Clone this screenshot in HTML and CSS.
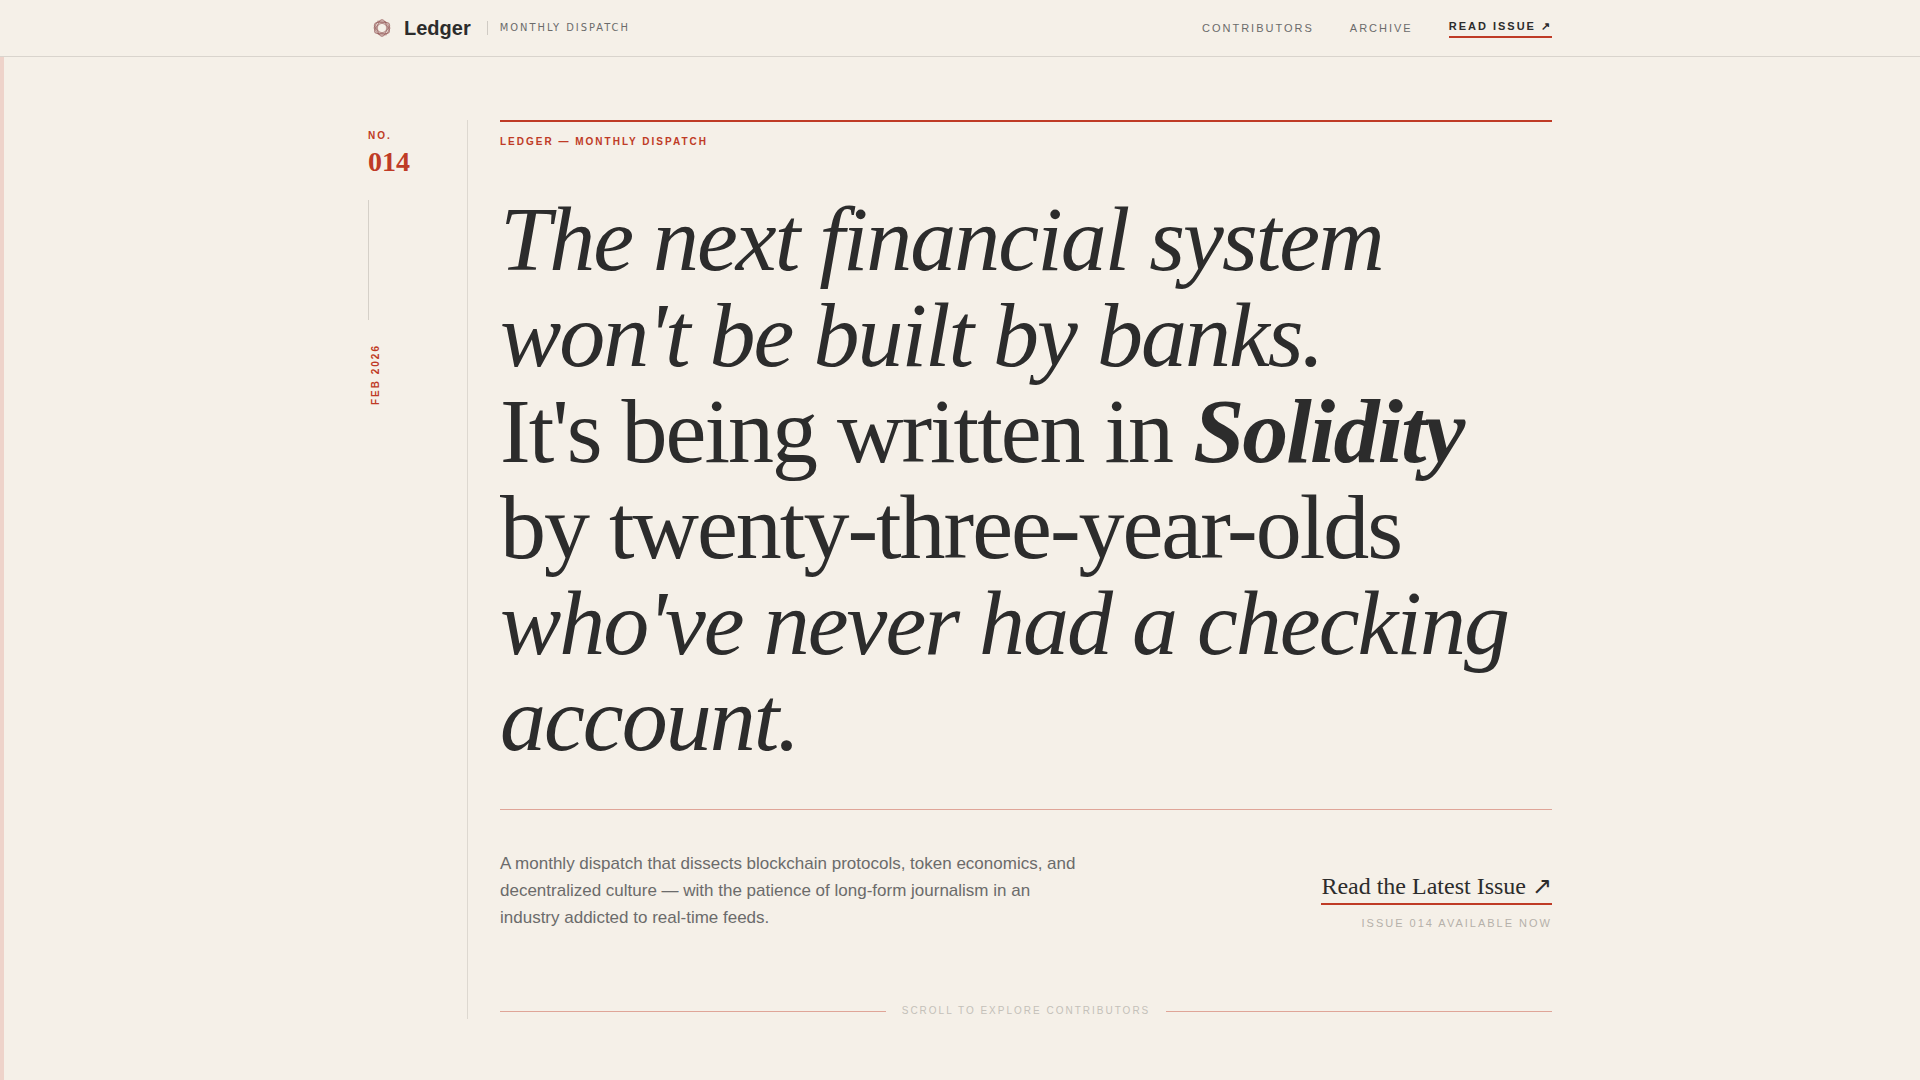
FILE: index.html
```html
<!DOCTYPE html>
<html lang="en">
<head>
    <meta charset="UTF-8">
    <meta name="viewport" content="width=device-width, initial-scale=1.0">
    <title>Ledger — Monthly Dispatch</title>
    <link rel="stylesheet" href="styles.css">
</head>
<body>

    <header class="site-header">
        <div class="container header-inner">
            <a class="brand" href="#">
                <svg class="brand-logo" viewBox="0 0 28 28" aria-hidden="true">
                    <ellipse cx="14" cy="14" rx="8.5" ry="4.5" transform="rotate(30 14 14)"/>
                    <ellipse cx="14" cy="14" rx="8.5" ry="4.5" transform="rotate(90 14 14)"/>
                    <ellipse cx="14" cy="14" rx="8.5" ry="4.5" transform="rotate(150 14 14)"/>
                    <path d="M14 6L21 10V18L14 22L7 18V10Z"/>
                    <path d="M14 7L21 10V18L14 21L7 18V10Z" transform="rotate(30 14 14)"/>
                    <circle cx="14" cy="14" r="5.5"/>
                </svg>
                <span class="brand-name">Ledger</span>
            </a>
            <span class="brand-tag">Monthly Dispatch</span>
            <nav class="site-nav">
                <a href="#contributors">Contributors</a>
                <a href="#archive">Archive</a>
                <a class="nav-cta" href="#issue">Read Issue ↗</a>
            </nav>
        </div>
    </header>

    <main class="hero">
        <div class="container hero-grid">
            <aside class="issue-rail">
                <span class="label">No.</span>
                <span class="issue-number">014</span>
                <span class="rail-line"></span>
                <span class="label issue-date">Feb 2026</span>
            </aside>

            <div class="hero-main">
                <p class="label kicker">Ledger — Monthly Dispatch</p>

                <h1>
                    <em>The next financial system<br>
                    won't be built by banks.</em><br>
                    It's being written in <em><strong>Solidity</strong></em><br>
                    by twenty-three-year-olds<br>
                    <em>who've never had a checking<br>
                    account.</em>
                </h1>

                <div class="hero-foot">
                    <p class="intro">A monthly dispatch that dissects blockchain protocols, token economics, and decentralized culture — with the patience of long-form journalism in an industry addicted to real-time feeds.</p>
                    <div class="cta">
                        <a class="cta-link" href="#issue">Read the Latest Issue ↗</a>
                        <span class="cta-note">Issue 014 available now</span>
                    </div>
                </div>

                <div class="scroll-hint">Scroll to explore contributors</div>
            </div>
        </div>
    </main>

</body>
</html>
```
FILE: styles.css
```css
* {
    box-sizing: border-box;
}

body {
    margin: 0;
    min-height: 100vh;
    display: flex;
    flex-direction: column;
    font-family: "Liberation Sans", Arial, sans-serif;
    background-color: #f5f0e8;
    color: #2c2c2c;
}

a {
    color: inherit;
    text-decoration: none;
}

p, h1 {
    margin: 0;
}

.container {
    width: 100%;
    max-width: 1280px;
    margin: 0 auto;
    padding: 0 48px;
}

/* header */

.site-header {
    border-bottom: 1px solid #d9d4cd;
}

.header-inner {
    display: flex;
    align-items: center;
    height: 56px;
}

.brand {
    display: flex;
    align-items: center;
    gap: 8px;
}

.brand-logo {
    width: 28px;
    height: 28px;
    fill: none;
    stroke: #8b4a4a;
    stroke-opacity: 0.5;
    stroke-width: 1;
}

.brand-name {
    font-size: 20px;
    font-weight: bold;
}

.brand-tag {
    margin-left: 16px;
    padding-left: 12px;
    border-left: 1px solid #d0cbc4;
    font-family: "DejaVu Sans Condensed", "DejaVu Sans", sans-serif;
    font-size: 11px;
    line-height: 14px;
    letter-spacing: 2px;
    text-transform: uppercase;
    color: #6b6b6b;
}

.site-nav {
    display: flex;
    align-items: center;
    gap: 36px;
    margin-left: auto;
    font-size: 11px;
    letter-spacing: 2px;
    text-transform: uppercase;
    color: #6b6b6b;
}

.nav-cta {
    padding: 2px 0 3px;
    border-bottom: 2px solid #bf3b26;
    font-weight: bold;
    color: #2c2c2c;
}

/* hero */

.hero {
    flex: 1;
    padding: 63px 0;
    background: linear-gradient(to right, #eed3ca 4px, transparent 4px);
}

.hero-grid {
    display: grid;
    grid-template-columns: 100px 1fr;
    gap: 32px;
}

.label {
    font-size: 10px;
    line-height: 16px;
    font-weight: bold;
    letter-spacing: 2px;
    text-transform: uppercase;
    color: #bf3b26;
}

.issue-rail {
    display: flex;
    flex-direction: column;
    align-items: flex-start;
    padding-top: 8px;
    border-right: 1px solid #ddd8d0;
}

.issue-number {
    margin-top: 2px;
    font-family: "Liberation Serif", "Times New Roman", serif;
    font-size: 28px;
    line-height: 32px;
    font-weight: bold;
    color: #bf3b26;
}

.rail-line {
    width: 1px;
    height: 120px;
    margin: 22px 0 24px;
    background-color: #d5d0c8;
}

.issue-date {
    writing-mode: vertical-rl;
    transform: rotate(180deg);
}

.kicker {
    padding-top: 12px;
    border-top: 2px solid #bf3b26;
}

h1 {
    margin-top: 41px;
    font-family: "Liberation Serif", "Times New Roman", serif;
    font-size: 92px;
    line-height: 96px;
    font-weight: normal;
    letter-spacing: -2px;
}

.hero-foot {
    display: flex;
    justify-content: space-between;
    align-items: flex-end;
    margin-top: 42px;
    padding-top: 40px;
    border-top: 1px solid #dfa598;
}

.intro {
    max-width: 580px;
    font-size: 17px;
    line-height: 27px;
    color: #6b6b6b;
}

.cta {
    display: flex;
    flex-direction: column;
    align-items: flex-end;
    gap: 10px;
}

.cta-link {
    padding-bottom: 3px;
    border-bottom: 2px solid #bf3b26;
    font-family: "Liberation Serif", "Times New Roman", serif;
    font-size: 24px;
}

.cta-note {
    font-size: 11px;
    line-height: 16px;
    letter-spacing: 2px;
    text-transform: uppercase;
    color: #b5b1aa;
}

.scroll-hint {
    display: flex;
    align-items: center;
    gap: 16px;
    margin-top: 72px;
    font-size: 10px;
    line-height: 16px;
    letter-spacing: 2px;
    text-transform: uppercase;
    color: #c4c0b9;
}

.scroll-hint::before,
.scroll-hint::after {
    content: "";
    flex: 1;
    height: 1px;
    background-color: #dfa598;
}
```
